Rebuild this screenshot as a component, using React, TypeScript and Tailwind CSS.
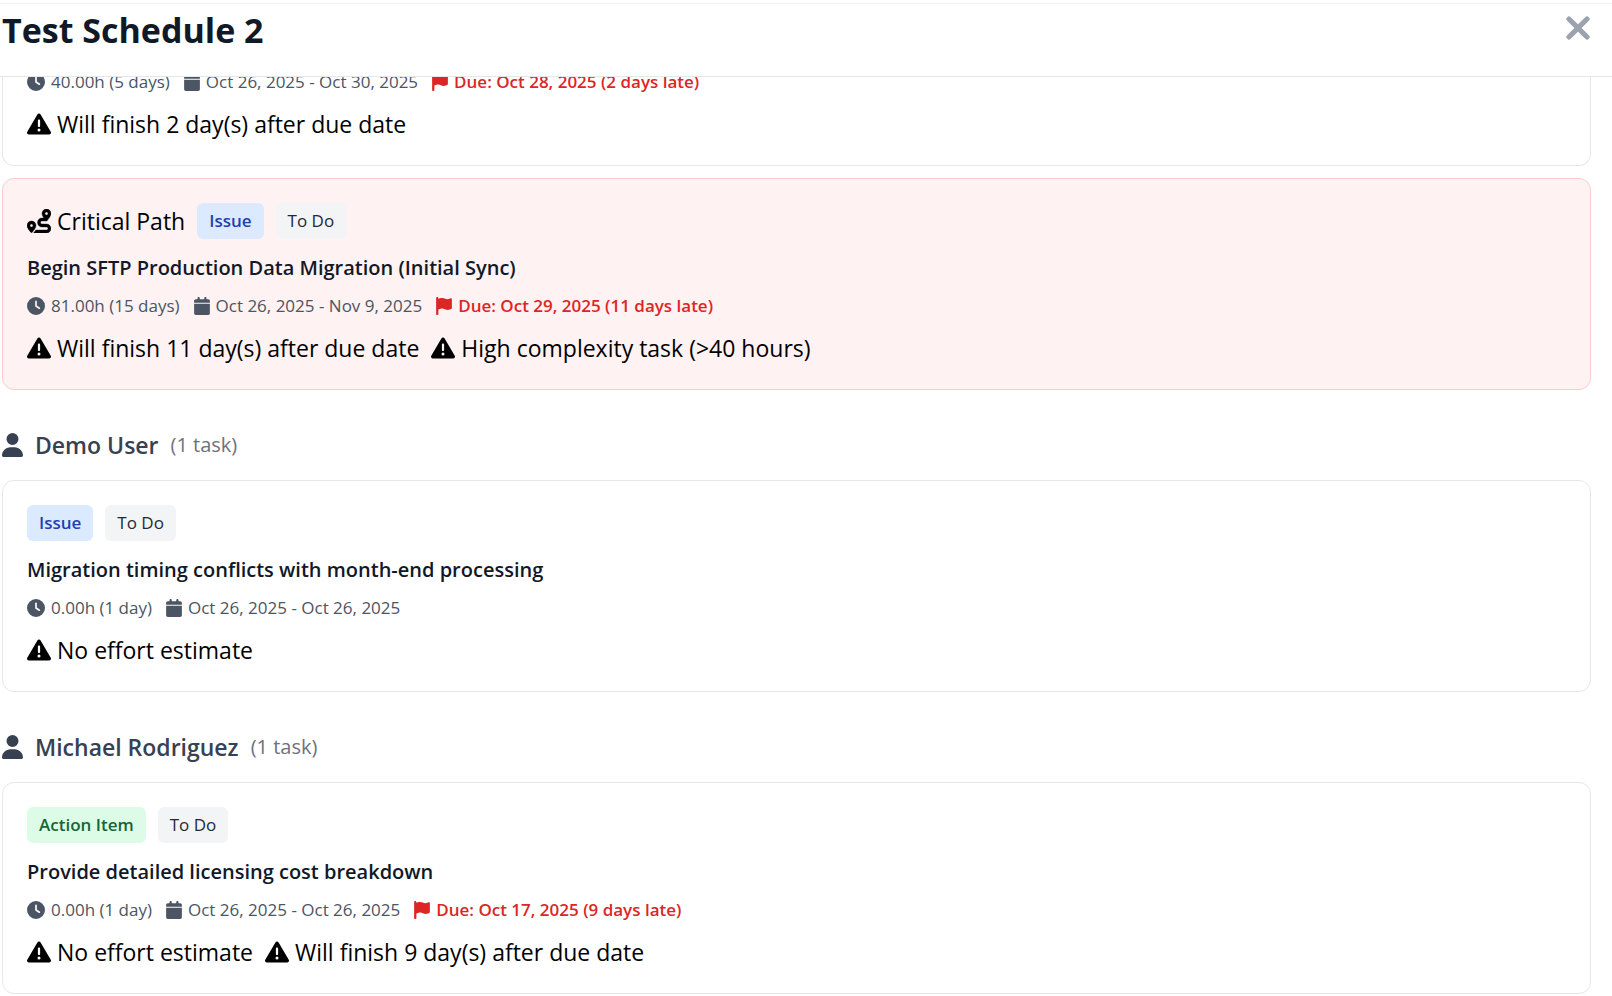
import type { ReactNode } from "react";
import {
  FaCalendar,
  FaClock,
  FaFlag,
  FaRoute,
  FaTriangleExclamation,
  FaUser,
  FaXmark,
} from "react-icons/fa6";

type BadgeTone = "issue" | "action" | "status";

const badgeTones: Record<BadgeTone, string> = {
  issue: "bg-[#dbeafe] text-[#1e40af] font-semibold",
  action: "bg-[#dcfce7] text-[#166534] font-semibold",
  status: "bg-[#f3f4f6] text-[#1f2937]",
};

function Badge({ tone, children }: { tone: BadgeTone; children: ReactNode }) {
  return (
    <span className={`rounded-md px-3 py-1.5 text-[17px] leading-6 ${badgeTones[tone]}`}>
      {children}
    </span>
  );
}

interface MetaProps {
  effort: string;
  dates: string;
  due?: string;
}

function Meta({ effort, dates, due }: MetaProps) {
  return (
    <div className="flex flex-wrap gap-x-3.5 text-[17px] leading-6 text-[#4b5563]">
      <span className="flex items-center gap-1.5">
        <FaClock className="size-[18px]" />
        {effort}
      </span>
      <span className="flex items-center gap-1.5">
        <FaCalendar className="h-[18px] w-4" />
        {dates}
      </span>
      {due && (
        <span className="flex items-center gap-1.5 font-semibold text-[#dc2626]">
          <FaFlag className="h-[18px] w-4" />
          {due}
        </span>
      )}
    </div>
  );
}

function Warnings({ items }: { items: string[] }) {
  return (
    <ul className="mt-3 flex flex-wrap gap-x-3 text-[23px] leading-9 text-black">
      {items.map((item) => (
        <li key={item} className="flex items-center gap-1.5">
          <FaTriangleExclamation className="size-6" />
          {item}
        </li>
      ))}
    </ul>
  );
}

interface Task extends MetaProps {
  title: string;
  kind: "issue" | "action";
  kindLabel: string;
  warnings: string[];
  critical?: boolean;
}

function TaskCard({ task }: { task: Task }) {
  const surface = task.critical ? "border-[#fecaca] bg-[#fef2f2]" : "border-[#e5e7eb] bg-white";
  return (
    <article className={`rounded-xl border px-6 pt-6 pb-[23px] ${surface}`}>
      <div className="flex flex-wrap items-center gap-x-3">
        {task.critical && (
          <span className="flex items-center gap-1.5 text-[23px] leading-9 text-black">
            <FaRoute className="size-6 stroke-current [stroke-width:8]" />
            Critical Path
          </span>
        )}
        <Badge tone={task.kind}>{task.kindLabel}</Badge>
        <Badge tone="status">To Do</Badge>
      </div>
      <h4 className="mt-3.5 mb-[11px] text-[20px] leading-[30px] font-semibold text-[#111827]">
        {task.title}
      </h4>
      <Meta effort={task.effort} dates={task.dates} due={task.due} />
      <Warnings items={task.warnings} />
    </article>
  );
}

function Assignee({ name, count }: { name: string; count: string }) {
  return (
    <h3 className="mt-[37px] mb-[17px] flex items-center gap-3 text-[23px] leading-9 font-semibold text-[#374151]">
      <FaUser className="h-6 w-[21px]" />
      {name}
      <span className="text-[20px] font-normal text-[#6b7280]">{count}</span>
    </h3>
  );
}

const migrationTask: Task = {
  title: "Begin SFTP Production Data Migration (Initial Sync)",
  kind: "issue",
  kindLabel: "Issue",
  effort: "81.00h (15 days)",
  dates: "Oct 26, 2025 - Nov 9, 2025",
  due: "Due: Oct 29, 2025 (11 days late)",
  warnings: ["Will finish 11 day(s) after due date", "High complexity task (>40 hours)"],
  critical: true,
};

const timingTask: Task = {
  title: "Migration timing conflicts with month-end processing",
  kind: "issue",
  kindLabel: "Issue",
  effort: "0.00h (1 day)",
  dates: "Oct 26, 2025 - Oct 26, 2025",
  warnings: ["No effort estimate"],
};

const licensingTask: Task = {
  title: "Provide detailed licensing cost breakdown",
  kind: "action",
  kindLabel: "Action Item",
  effort: "0.00h (1 day)",
  dates: "Oct 26, 2025 - Oct 26, 2025",
  due: "Due: Oct 17, 2025 (9 days late)",
  warnings: ["No effort estimate", "Will finish 9 day(s) after due date"],
};

export default function App() {
  return (
    <div className="min-h-screen bg-white pt-[3px] font-['Open_Sans','Noto_Sans',sans-serif]">
      <header className="flex items-start justify-between border-t border-b border-t-[#f3f4f6] border-b-[#e5e7eb] pt-1.5 pr-4 pb-[26px] pl-0.5">
        <h2 className="text-[34px] leading-10 font-bold text-[#111827]">Test Schedule 2</h2>
        <button type="button" aria-label="Close" className="text-[#9ca3af]">
          <FaXmark className="size-9 stroke-current [stroke-width:14]" />
        </button>
      </header>
      <main className="overflow-hidden pr-[21px] pb-0.5 pl-0.5">
        {/* Scrolled under the header: only the lower rows of this card remain in view */}
        <article className="mb-3 rounded-b-xl border border-t-0 border-[#e5e7eb] bg-white px-6 pb-[23px]">
          <div className="-mt-[7px]">
            <Meta
              effort="40.00h (5 days)"
              dates="Oct 26, 2025 - Oct 30, 2025"
              due="Due: Oct 28, 2025 (2 days late)"
            />
            <Warnings items={["Will finish 2 day(s) after due date"]} />
          </div>
        </article>
        <TaskCard task={migrationTask} />
        <Assignee name="Demo User" count="(1 task)" />
        <TaskCard task={timingTask} />
        <Assignee name="Michael Rodriguez" count="(1 task)" />
        <TaskCard task={licensingTask} />
      </main>
    </div>
  );
}
